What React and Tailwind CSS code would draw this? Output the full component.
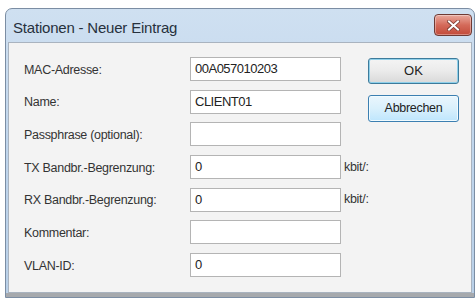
import React from "react";

const rows = [
  { label: "MAC-Adresse:", value: "00A057010203" },
  { label: "Name:", value: "CLIENT01" },
  { label: "Passphrase (optional):", value: "" },
  { label: "TX Bandbr.-Begrenzung:", value: "0", unit: "kbit/:" },
  { label: "RX Bandbr.-Begrenzung:", value: "0", unit: "kbit/:" },
  { label: "Kommentar:", value: "" },
  { label: "VLAN-ID:", value: "0" },
];

export default function App() {
  return (
    <div
      className="w-[476px] h-[298px] bg-white overflow-hidden pl-[5px] pt-[8px]"
      style={{ fontFamily: '"Liberation Sans", Arial, sans-serif' }}
    >
      <div className="w-[470px] h-[290px] rounded-t-[7px] border border-[#7b8da3] bg-gradient-to-b from-[#cfe0f1] via-[#bfd5ec] to-[#b9d0e8] flex flex-col">
        {/* Title bar */}
        <div className="h-[33px] flex items-start justify-between pl-[7px] pr-[2px]">
          <span className="text-[15px] text-[#27313d] mt-[11px] leading-none tracking-[-0.2px]">
            Stationen - Neuer Eintrag
          </span>
          <div className="mt-[5px] w-[38px] h-[22px] rounded-[4px] border border-[#6e3a34] bg-gradient-to-b from-[#e8a99e] via-[#d46a5a] to-[#c24a39] flex items-center justify-center shadow-[inset_0_0_0_1px_rgba(255,255,255,0.35)]">
            <svg width="13" height="11" viewBox="0 0 13 11">
              <path d="M2 1.5 L11 9.5 M11 1.5 L2 9.5" stroke="#7a3a30" strokeWidth="3.6" strokeLinecap="square" />
              <path d="M2 1.5 L11 9.5 M11 1.5 L2 9.5" stroke="#ffffff" strokeWidth="2" strokeLinecap="square" />
            </svg>
          </div>
        </div>
        {/* Body */}
        <div className="mx-[2px] flex-1 border border-[#a9b3bf] bg-[#f3f3f3] flex pl-[15px] pt-[14px]">
          <div className="flex flex-col gap-[8.7px]">
            {rows.map((r) => (
              <div key={r.label} className="flex items-center h-[24px]">
                <div className="w-[166px] text-[12.5px] text-[#333] tracking-[-0.3px] pt-[2px]">{r.label}</div>
                <div className="w-[151px] h-[24px] bg-white border border-[#b4b4b4] flex items-center pl-[4px] text-[13px] text-[#222] tracking-[-0.5px]">
                  {r.value}
                </div>
                <div className="w-[27px] pl-[3px] text-[12.5px] text-[#333] tracking-[-0.3px]">{r.unit || ""}</div>
              </div>
            ))}
          </div>
          <div className="flex flex-col gap-[11px] pt-[1px]">
            <div className="w-[91px] h-[26px] rounded-[3px] border border-[#3d7b9b] bg-gradient-to-b from-[#f4f4f4] via-[#ebebeb] to-[#d9d9d9] shadow-[inset_0_0_0_1px_#8fd0ea] flex items-center justify-center text-[13px] text-[#222]">
              OK
            </div>
            <div className="w-[91px] h-[27px] rounded-[3px] border border-[#3c7fb1] bg-gradient-to-b from-[#eaf6fd] via-[#d9f0fc] to-[#bee6fd] shadow-[inset_0_0_0_1px_#f0fbff] flex items-center justify-center text-[12.5px] text-[#222] tracking-[-0.3px]">
              Abbrechen
            </div>
          </div>
        </div>
        <div className="h-[4px] bg-[#a6a9ad]" />
      </div>
    </div>
  );
}
